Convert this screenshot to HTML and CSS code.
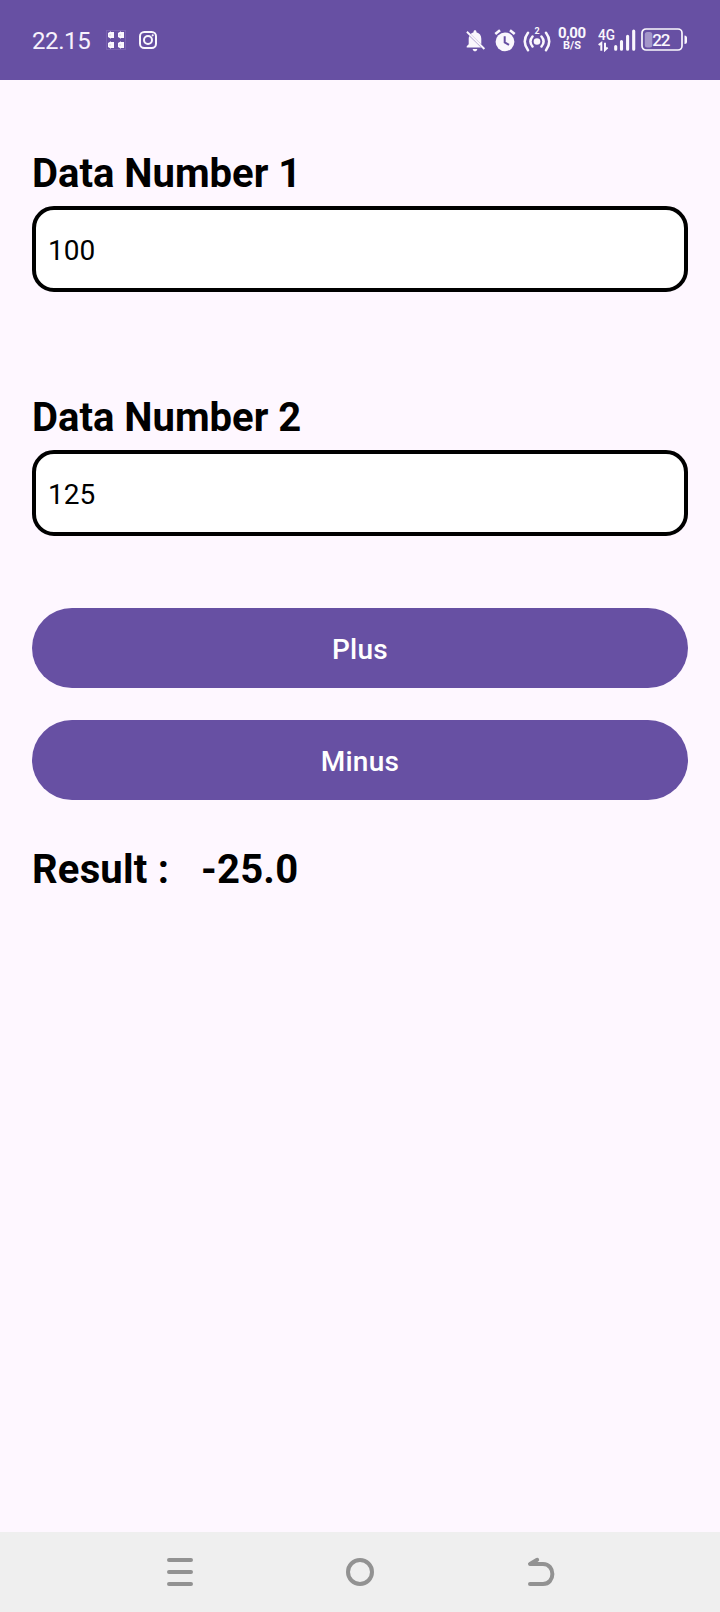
FILE: index.html
```html
<!DOCTYPE html>
<html lang="en">
<head>
<meta charset="utf-8">
<title>Data Number</title>
<link rel="stylesheet" href="styles.css">
</head>
<body>
<div class="screen">
  <header class="status">
    <div class="status-left">
      <span class="clock">22.15</span>
      <svg class="icon app" viewBox="0 0 20 20" width="20" height="20">
        <rect class="frame" x=".5" y=".5" width="19" height="19"/>
        <path d="M2 3L5 1.300V2H8V8H5V8.700L2 7ZM12 3L15 1.300V2H18V8H15V8.700L12 7ZM2 13L5 11.300V12H8V18H5V18.700L2 17ZM12 13L15 11.300V12H18V18H15V18.700L12 17Z"/>
        <path class="gap" d="M3 5H5M13 5H15M3 15H5M13 15H15"/>
      </svg>
      <svg class="icon line insta" viewBox="0 0 18 18" width="18" height="18">
        <rect x="1" y="1" width="16" height="16" rx="4.300"/>
        <circle cx="9" cy="9" r="4"/>
        <circle class="solid" cx="13.700" cy="4.300" r="1.100"/>
      </svg>
    </div>
    <div class="status-right">
      <svg class="icon bell" viewBox="0 0 20 22" width="20" height="22">
        <path d="M4.600 3.900C5.500 3 6.500 2.500 7.600 2.200V1.600C7.600-.2 10.400-.2 10.400 1.600V2.200C13.600 3 15.300 5.500 15.300 8.800V14.400Z"/>
        <path d="M3.300 5.900L15.100 17.500H.7V16.300L2.700 14.300V8.800C2.700 7.700 2.900 6.700 3.300 5.900Z"/>
        <path d="M6.700 18.900H11.300C11 22 7 22 6.700 18.900Z"/>
        <path class="slash" d="M.9 1.700L18.400 19"/>
      </svg>
      <svg class="icon alarm" viewBox="0 0 22 23" width="22" height="23">
        <circle cx="11" cy="12.800" r="9.400"/>
        <path class="stroke" d="M1.300 5L6 1.200M20.700 5L16 1.200"/>
        <path class="hands" d="M10.700 7.300V13.300L15 15.800"/>
      </svg>
      <svg class="icon hotspot" viewBox="0 0 28 25" width="28" height="25">
        <circle cx="14" cy="14.500" r="3.300"/>
        <path class="arc" d="M9.500 9.500Q5.300 14.500 9.500 19.500M18.500 9.500Q22.700 14.500 18.500 19.500M5 5.800Q-1.500 14.500 5 23.200M23 5.800Q29.500 14.500 23 23.200"/>
        <text x="11.500" y="7" font-size="9">2</text>
      </svg>
      <svg class="icon speed" viewBox="0 -4 30 28" width="30" height="28">
        <text x="15" y="11" font-size="15" text-anchor="middle" textLength="28">0,00</text>
        <text x="15" y="22" font-size="11" text-anchor="middle" textLength="18">B/S</text>
      </svg>
      <svg class="icon signal" viewBox="0 0 38 24" width="38" height="24">
        <text x="0" y="12" font-size="14.500" textLength="17" lengthAdjust="spacingAndGlyphs">4G</text>
        <path class="arrows" d="M.7 17L3.300 15V22.800M7 14.800V22L9.600 19.600"/>
        <path class="bars" d="M17.700 18.500V21.300M23.500 13.500V21.300M29.600 8.300V21.300M35.700 3V21.300"/>
      </svg>
      <svg class="icon battery" viewBox="0 0 47 24" width="47" height="24">
        <rect class="shell" x="1" y="1" width="40" height="21" rx="4"/>
        <rect class="level" x="3.800" y="4" width="7.500" height="15.500" rx="2.500"/>
        <path d="M43.500 7.500Q46 7.500 46 10V13.500Q46 16 43.500 16Z"/>
        <text x="11.300" y="17.500" font-size="17" textLength="18">22</text>
      </svg>
    </div>
  </header>
  <main class="content">
    <label class="label" for="n1">Data Number 1</label>
    <input class="field" id="n1" type="text" value="100">
    <label class="label second" for="n2">Data Number 2</label>
    <input class="field" id="n2" type="text" value="125">
    <div class="actions">
      <button class="button">Plus</button>
      <button class="button">Minus</button>
    </div>
    <div class="result"><span>Result :</span><span>-25.0</span></div>
  </main>
  <nav class="nav">
    <svg class="nav-icon" viewBox="0 0 40 40" width="40" height="40"><path d="M9 8H31M9 20H31M9 32H31"/></svg>
    <svg class="nav-icon" viewBox="0 0 40 40" width="40" height="40"><circle cx="20" cy="20" r="12"/></svg>
    <svg class="nav-icon" viewBox="0 0 40 40" width="40" height="40"><path d="M17.200 7.800L10 12H23C35.500 12 35.500 32 23 32H10"/></svg>
  </nav>
</div>
</body>
</html>
```
FILE: styles.css
```css
* { box-sizing: border-box; }
body { margin: 0; font-family: Roboto, sans-serif; }
.screen { display: flex; flex-direction: column; width: 720px; height: 1612px; background: #fef7ff; color: #000; }

.status { display: flex; justify-content: space-between; height: 80px; padding: 0 32px; background: #6750a3; color: #f7f2fc; }
.status-left, .status-right { display: flex; align-items: flex-start; }
.clock { width: 74px; margin-top: 26px; font-size: 24px; line-height: 30px; letter-spacing: -0.4px; }
.icon { flex: none; fill: #faf7fd; stroke: none; }
.icon text { font-family: Roboto, sans-serif; font-weight: 700; }
.app { margin-top: 30px; }
.app .frame { fill: none; stroke: #7962b0; }
.app .gap { stroke: #d5cbe6; stroke-width: 1; }
.insta { margin: 31px 0 0 13px; }
.line { fill: none; stroke: #faf7fd; stroke-width: 2; }
.line .solid { fill: #faf7fd; stroke: none; }
.bell { margin-top: 30px; }
.slash { stroke: #faf7fd; stroke-width: 1.9; }
.alarm { margin: 29px 0 0 8px; }
.alarm .stroke { stroke: #faf7fd; stroke-width: 2.6; }
.hands { fill: none; stroke: #6750a3; stroke-width: 2; }
.hotspot { margin: 27px 0 0 7px; }
.arc { fill: none; stroke: #faf7fd; stroke-width: 2.5; stroke-linecap: round; }
.speed { margin: 23px 0 0 6px; }
.signal { margin: 28px 0 0 11px; }
.signal text { font-weight: 500; }
.arrows { fill: none; stroke: #faf7fd; stroke-width: 2; }
.bars { stroke: #faf7fd; stroke-width: 3.1; stroke-linecap: round; }
.battery { margin: 28px 0 0 5px; }
.battery text { font-weight: 500; }
.battery .shell { fill: none; stroke: #faf7fd; stroke-width: 1.7; }
.battery .level { fill: #a496ca; }

.content { display: flex; flex: 1; flex-direction: column; padding: 70px 32px 0; }
.label, .result { font-size: 40px; font-weight: 700; line-height: 48px; }
.label { margin-bottom: 8px; }
.second { margin-top: 102px; }
.field { height: 86px; padding: 2px 12px 0; border: 4px solid #000; border-radius: 22px; background: #fff; color: #000; font-family: Roboto, sans-serif; font-size: 28px; outline: none; }
.actions { display: flex; flex-direction: column; gap: 32px; margin-top: 72px; }
.button { height: 80px; padding: 3px 0 0; border: 0; border-radius: 40px; background: #6750a3; color: #fff; font-family: Roboto, sans-serif; font-size: 28px; font-weight: 500; letter-spacing: 0.3px; }
.result { display: flex; gap: 32px; margin-top: 46px; letter-spacing: 0.2px; }

.nav { display: flex; justify-content: space-between; align-items: center; height: 80px; padding: 0 160px; background: #efefef; }
.nav-icon { fill: none; stroke: #929292; stroke-width: 4; stroke-linecap: round; stroke-linejoin: round; }
```
